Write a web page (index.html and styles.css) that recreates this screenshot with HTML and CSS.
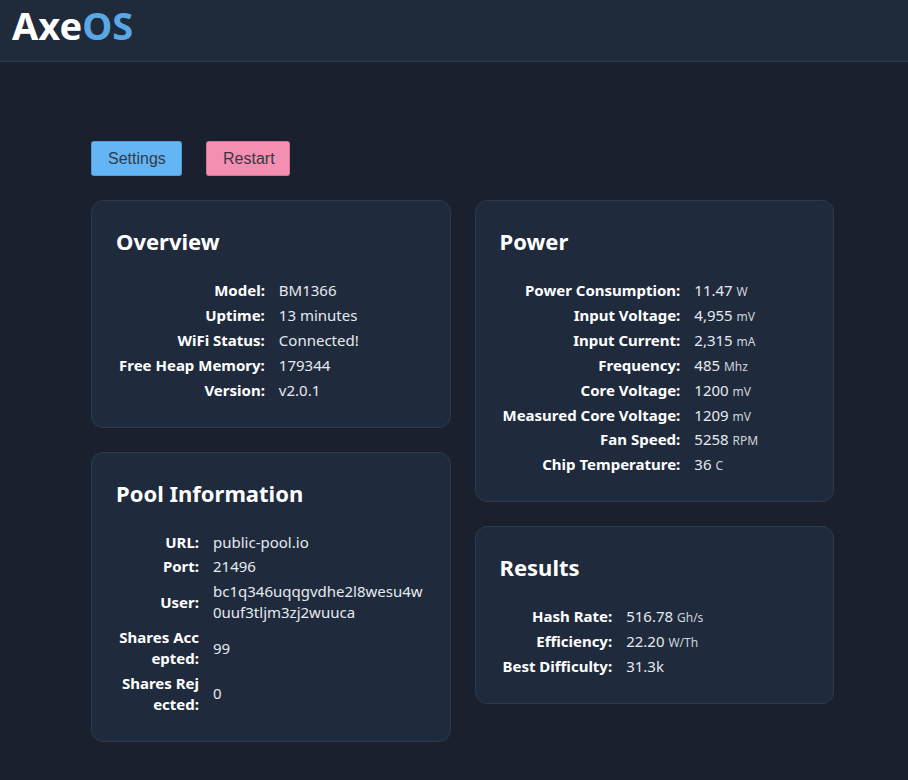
FILE: index.html
```html
<!DOCTYPE html>
<html lang="en">
<head>
    <meta charset="UTF-8">
    <meta name="viewport" content="width=device-width, initial-scale=1.0">
    <title>AxeOS</title>
    <link rel="stylesheet" href="styles.css">
</head>
<body>
    <header class="topbar">
        <div class="logo">Axe<span class="logo-os">OS</span></div>
    </header>

    <main class="content">
        <div class="actions">
            <button class="btn btn-settings">Settings</button>
            <button class="btn btn-restart">Restart</button>
        </div>

        <div class="columns">
            <div class="column">
                <section class="card">
                    <h2 class="card-title">Overview</h2>
                    <table class="info">
                        <tr><th>Model:</th><td>BM1366</td></tr>
                        <tr><th>Uptime:</th><td>13 minutes</td></tr>
                        <tr><th>WiFi Status:</th><td>Connected!</td></tr>
                        <tr><th>Free Heap Memory:</th><td>179344</td></tr>
                        <tr><th>Version:</th><td>v2.0.1</td></tr>
                    </table>
                </section>

                <section class="card">
                    <h2 class="card-title">Pool Information</h2>
                    <table class="info info-pool">
                        <tr><th>URL:</th><td>public-pool.io</td></tr>
                        <tr><th>Port:</th><td>21496</td></tr>
                        <tr><th>User:</th><td>bc1q346uqqgvdhe2l8wesu4w0uuf3tljm3zj2wuuca</td></tr>
                        <tr><th>Shares Accepted:</th><td>99</td></tr>
                        <tr><th>Shares Rejected:</th><td>0</td></tr>
                    </table>
                </section>
            </div>

            <div class="column">
                <section class="card">
                    <h2 class="card-title">Power</h2>
                    <table class="info">
                        <tr><th>Power Consumption:</th><td>11.47 <small>W</small></td></tr>
                        <tr><th>Input Voltage:</th><td>4,955 <small>mV</small></td></tr>
                        <tr><th>Input Current:</th><td>2,315 <small>mA</small></td></tr>
                        <tr><th>Frequency:</th><td>485 <small>Mhz</small></td></tr>
                        <tr><th>Core Voltage:</th><td>1200 <small>mV</small></td></tr>
                        <tr><th>Measured Core Voltage:</th><td>1209 <small>mV</small></td></tr>
                        <tr><th>Fan Speed:</th><td>5258 <small>RPM</small></td></tr>
                        <tr><th>Chip Temperature:</th><td>36 <small>C</small></td></tr>
                    </table>
                </section>

                <section class="card">
                    <h2 class="card-title">Results</h2>
                    <table class="info">
                        <tr><th>Hash Rate:</th><td>516.78 <small>Gh/s</small></td></tr>
                        <tr><th>Efficiency:</th><td>22.20 <small>W/Th</small></td></tr>
                        <tr><th>Best Difficulty:</th><td>31.3k</td></tr>
                    </table>
                </section>
            </div>
        </div>
    </main>
</body>
</html>
```

FILE: styles.css
```css
* {
    margin: 0;
    padding: 0;
    box-sizing: border-box;
}

body {
    background-color: #1a202d;
    color: #e6e9ee;
    font-family: "Noto Sans", "Open Sans", sans-serif;
    font-size: 15px;
}

.topbar {
    height: 62px;
    background-color: #1f2a3a;
    border-bottom: 1px solid #2b3b4f;
    padding: 6px 12px 0;
    display: flex;
    align-items: flex-start;
}

.logo {
    font-size: 38px;
    font-weight: bold;
    color: #ffffff;
    line-height: 1;
}

.logo-os {
    color: #5aa7e6;
}

.content {
    padding: 79px 74px 40px 91px;
}

.actions {
    display: flex;
    gap: 24px;
    margin-bottom: 24px;
}

.btn {
    height: 35px;
    padding: 0 16px;
    border: 1px solid rgba(0, 0, 0, 0.15);
    border-radius: 3px;
    font-family: "Liberation Sans", Arial, sans-serif;
    font-size: 16px;
    color: #333a44;
    cursor: pointer;
}

.btn-settings {
    width: 91px;
    background-color: #64b5f6;
}

.btn-restart {
    width: 84px;
    background-color: #f48fb1;
}

.columns {
    display: flex;
    gap: 24px;
    align-items: flex-start;
}

.column {
    width: 360px;
    display: flex;
    flex-direction: column;
    gap: 24px;
}

.card {
    background-color: #1f2b3d;
    border: 1px solid #2b3a4d;
    border-radius: 12px;
    padding: 24px;
}

.card-title {
    font-size: 22px;
    font-weight: bold;
    color: #ffffff;
    line-height: 32px;
    margin-bottom: 21px;
}

.info {
    border-collapse: collapse;
}

.info th {
    text-align: right;
    font-weight: bold;
    color: #ffffff;
    padding: 2px 7px 2px 3px;
    line-height: 20.9px;
    vertical-align: middle;
    white-space: nowrap;
}

.info td {
    padding: 2px 3px 2px 7px;
    line-height: 20.9px;
    vertical-align: middle;
}

.info small {
    font-size: 12px;
    line-height: 1;
    color: #cfd4dc;
}

.info-pool th {
    white-space: normal;
    word-break: break-all;
    width: 90px;
}

.info-pool td {
    padding-right: 0;
    word-break: break-all;
}
```
